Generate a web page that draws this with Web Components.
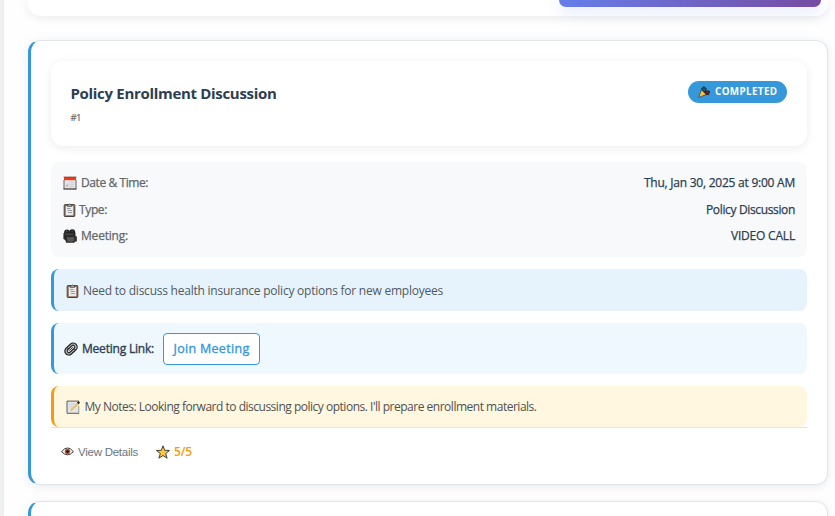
<!DOCTYPE html>
<html lang="en"><head><meta charset="utf-8"><title>Appointments</title>
<style>
html,body{margin:0;height:100%;overflow:hidden;background:#f0f1f3}
body{font-family:"Open Sans","Noto Sans",sans-serif;color:#2c3e50}
</style></head><body>
<meeting-page>
<booking-bar></booking-bar>
<meeting-card>
<card-header slot="head" heading="Policy Enrollment Discussion" number="#1" status="COMPLETED"></card-header>
<info-panel>
<info-row icon="calendar" label="Date &amp; Time:" lw="67" value="Thu, Jan 30, 2025 at 9:00 AM" vw="151" gap="4"></info-row>
<info-row icon="clipboard" label="Type:" lw="28" value="Policy Discussion" vw="89" gap="2"></info-row>
<info-row icon="camera" label="Meeting:" lw="47" value="VIDEO CALL" vw="64" gap="4"></info-row>
</info-panel>
<note-box style="--bg:#e6f3fd;--h:42px;--top:2px;--fg:#505a62;--gap:3px"><ui-icon slot="icon" name="clipboard"></ui-icon><fit-text w="360">Need to discuss health insurance policy options for new employees</fit-text></note-box>
<note-box style="--bg:#eff7ff;--h:51px;--pad:10px;--stroke:.35px;--gap:4px"><ui-icon slot="icon" name="link"></ui-icon><fit-text w="72">Meeting Link:</fit-text><join-button>Join Meeting</join-button></note-box>
<note-box style="--bg:#fff7df;--bar:#f39c12;--h:41px;--fg:#505050;--gap:4.5px"><ui-icon slot="icon" name="memo"></ui-icon><fit-text w="452">My Notes: Looking forward to discussing policy options. I'll prepare enrollment materials.</fit-text></note-box>
<card-footer slot="foot"></card-footer>
</meeting-card>
<meeting-card></meeting-card>
</meeting-page>
<script>
const icons={
calendar:`<path d="M1 1h12v12H1z" fill="#e4e6ea"/><path d="M1 1h12v3.2H1z" fill="#f03a17"/><path d="M1 4v9M13 4v9" stroke="#65616a"/><path d="M.5 13h13" stroke="#333" stroke-width="1.2"/><path d="M.5 1h13" stroke="#8a3a30" stroke-width=".7"/><path d="M6 6h5M3.5 8.2H11M6 10.4h5" stroke="#cfccd3"/><path d="M3 9.8h2" stroke="#f08a75" stroke-width="1.3"/>`,
clipboard:`<rect x="1.2" y="1.6" width="10.6" height="11.9" rx=".8" fill="#9a735a" stroke="#4b3f37" stroke-width="1"/><path d="M2.8 3h7.4v9.2H2.8z" fill="#e9ecee"/><path d="M4.2 3.4V2l1.2-.2Q6.5 0 7.6 1.8L8.8 2v1.4z" fill="#aaa" stroke="#333" stroke-width=".6"/><path d="M4 5.5h3.5M4.5 7.5h4.5M5 9.5h4" stroke="#85868c" stroke-width=".8"/>`,
camera:`<circle cx="4" cy="3.3" r="2.9" fill="#292929"/><circle cx="9.2" cy="3.2" r="3" fill="#222"/><path d="M.5 4h12v3.2h1.3v5.2l-1.6.2-1 1.2H3.2L2.2 11 .4 10z" fill="#292929"/><path d="M3.4 8h8v4.3h-7z" fill="#505050"/><path d="M2 5.2h8M4.5 10h5.2M4.8 12h5M3 2.2h1.5M8.5 2H10" stroke="#717171" stroke-width=".6"/><path d="M8.8 8.5h1.4" stroke="#c53c35" stroke-width=".7"/>`,
link:`<g transform="rotate(-43 7 7)" fill="none"><rect x=".1" y="3.1" width="13.8" height="7.8" rx="3.8" fill="#c4c7ca" stroke="#202020" stroke-width="1.2"/><rect x="2.4" y="5.3" width="9.2" height="3.4" rx="1.7" fill="#eee" stroke="#262626" stroke-width="1.2"/><path d="M4.6 7h4.8M5 3.5v2M9 8.7v2" stroke="#333" stroke-width=".9"/></g>`,
memo:`<path d="M1 1.3h12v12H1z" fill="#e2e5e9"/><path d="M13 1.1H1v12.2h12" fill="none" stroke="#4c4b49" stroke-width=".9"/><path d="M12.8 6v7.3" stroke="#8a8986" stroke-width=".8"/><path d="M3 4h6M3 6h5M3 8h3" stroke="#cdd0d4" stroke-width=".7"/><path d="M4 11.5l1-2.5L12 2l1.5 1.4L6.3 10.3z" fill="#efbe4c"/><path d="M11 2.8l1.6-1.7L14 2.6l-1.4 1.6z" fill="#27231e"/>`,
eye:`<path d="M.6 7.2Q7-.8 13.4 7.2 7 14 .6 7.2Z" fill="#fff" stroke="#292522"/><circle cx="7" cy="7.1" r="3" fill="#b2592f"/><circle cx="7" cy="7.1" r="1.4" fill="#120d0c"/>`,
star:`<path d="M7 .8l1.7 4.5 4.8.2-3.8 3 1.4 4.7L7 10.5l-4.1 2.7 1.4-4.7-3.8-3 4.8-.2z" fill="#ffc83d" stroke="#302e29" stroke-width=".9" stroke-linejoin="round"/>`,
party:`<path d="M.8 13.3L4 4.5 9.5 10z" fill="#f9c344" stroke="#352816" stroke-width=".7"/><path d="M4.2 4.2Q3.5 2 5.8 2.4 5.5.2 7.5 1l2.2 2.2-2 4z" fill="#174e5c" stroke="#151f25" stroke-width=".8"/><path d="M7.6 7l2-1.8 3.9.8.3 1.8-1.6.5.6 1.5-2.8.4z" fill="#6e1b22" stroke="#1e1719" stroke-width=".7"/><path d="M5 3l3 3M8 3l-1 2" stroke="#2a8090" stroke-width=".6"/>`};
const make=(name,html,after)=>customElements.define(name,class extends HTMLElement{
 connectedCallback(){if(this.shadowRoot)return;const r=this.attachShadow({mode:'open'});r.innerHTML=typeof html==='function'?html(this):html;if(after)after(this,r)}});
const esc=s=>(s||'').replace(/&/g,'&amp;');
make('ui-icon',e=>`<style>:host{display:block;flex:none;width:var(--icon,14px);height:var(--icon,14px)}svg{display:block;width:100%;height:100%}</style><svg viewBox="0 0 14 14">${icons[e.getAttribute('name')]}</svg>`);
make('meeting-page','<style>:host{display:flex;flex-direction:column;box-sizing:border-box;height:516px;margin-left:4px;padding:0 7px 0 24px;background:#fefefe;overflow:hidden;box-shadow:0 0 8px #0000000a}</style><slot></slot>');
make('booking-bar','<style>:host{display:flex;flex:none;justify-content:flex-end;box-sizing:border-box;height:16px;padding:0 7px 9px 0;margin-bottom:24px;border-radius:0 0 12px 12px;background:#fff;box-shadow:0 2px 10px #00000014}div{width:262px;border-radius:0 0 8px 8px;background:linear-gradient(90deg,#667eea,#764ba2);box-shadow:0 4px 15px #667eea40}</style><div></div>');
make('meeting-card','<style>:host{display:flex;flex-direction:column;flex:none;box-sizing:border-box;height:445px;margin-bottom:16px;padding:20px;background:#fff;border:1px solid #dfe6ec;border-left:3px solid #3498db;border-radius:12px;box-shadow:0 2px 10px #00000014}.body{display:flex;flex-direction:column;gap:12px;margin-top:16px}</style><slot name="head"></slot><div class="body"><slot></slot></div><slot name="foot"></slot>');
make('card-header',e=>`<style>:host{display:flex;justify-content:space-between;align-items:flex-start;box-sizing:border-box;height:85px;padding:20px 20px 20px 19.5px;border-radius:12px;background:#fff;box-shadow:0 2px 10px #00000014}.title{font:700 15px/24px "Open Sans",sans-serif}.no{font:400 9.5px/14px "Open Sans",sans-serif;color:#666;-webkit-text-stroke:.2px;margin-top:6px}.badge{display:flex;align-items:center;box-sizing:border-box;width:99px;height:22px;padding:0 10px;gap:5px;border-radius:11px;background:#3498db;color:#fff;font:700 9.8px/22px "Open Sans",sans-serif;--icon:12px}</style><div><div class="title"><fit-text w="206">${e.getAttribute('heading')}</fit-text></div><div class="no"><fit-text w="10.5">${e.getAttribute('number')}</fit-text></div></div><div class="badge"><ui-icon name="party"></ui-icon><fit-text w="62.5">${e.getAttribute('status')}</fit-text></div>`);
make('info-panel','<style>:host{display:flex;flex-direction:column;box-sizing:border-box;height:95px;padding:7.5px 12px;border-radius:8px;background:#f8f9fb}</style><slot></slot>');
make('info-row',e=>`<style>:host{display:flex;flex:1;align-items:center;justify-content:space-between;font-size:12px;line-height:18px;-webkit-text-stroke:.25px}.l{display:flex;align-items:center;color:#626669;gap:${e.getAttribute('gap')}px}.v{color:#2c3e50}ui-icon{-webkit-text-stroke:0}</style><div class="l"><ui-icon name="${e.getAttribute('icon')}"></ui-icon><fit-text w="${e.getAttribute('lw')}">${esc(e.getAttribute('label'))}</fit-text></div><div class="v"><fit-text w="${e.getAttribute('vw')}">${e.getAttribute('value')}</fit-text></div>`);
make('note-box','<style>:host{display:flex;align-items:center;box-sizing:border-box;height:var(--h);padding:var(--top,0) var(--pad,12px) 0;background:var(--bg);border-left:3px solid var(--bar,#3498db);border-radius:8px;color:var(--fg,#2c3e50);font-size:12px;line-height:18px;-webkit-text-stroke:var(--stroke,0)}::slotted(ui-icon){margin-right:var(--gap)}</style><slot name="icon"></slot><slot></slot>');
make('join-button',e=>`<style>:host{display:flex;align-items:center;justify-content:center;box-sizing:border-box;width:97px;height:32px;padding-top:1px;margin-left:9px;border:1px solid #3498db;border-radius:4px;background:#fff;color:#3498db;font:400 12.5px/18px "Open Sans",sans-serif}</style><fit-text w="76">${e.textContent}</fit-text>`);
make('card-footer','<style>:host{display:flex;align-items:center;box-sizing:border-box;height:37px;padding:12px 10px 1px;border-top:1px solid #dee6ec}.view{display:flex;align-items:center;gap:4px;font:11.5px/16px "Liberation Sans",sans-serif;color:#6c757d;--icon:13px}.rate{display:flex;align-items:center;gap:4px;margin-left:18px;color:#f39c12;font:600 12px/16px "Open Sans",sans-serif}</style><div class="view"><ui-icon name="eye"></ui-icon><fit-text w="60">View Details</fit-text></div><div class="rate"><ui-icon name="star"></ui-icon><fit-text w="18">5/5</fit-text></div>');
/* A single line whose tracking is set so that it fills its nominal width.
   Defined last, so every surrounding font style is in place when it measures. */
make('fit-text','<style>:host{display:block;flex:none;white-space:nowrap}span{display:inline-block}</style><span><slot></slot></span>',(e,r)=>{
 const s=r.querySelector('span'),w=+e.getAttribute('w'),n=e.textContent.length;
 s.style.letterSpacing='0px';const d=w-s.getBoundingClientRect().width;
 s.style.letterSpacing=(d/n)+'px';e.style.width=w+'px'});
</script></body></html>
